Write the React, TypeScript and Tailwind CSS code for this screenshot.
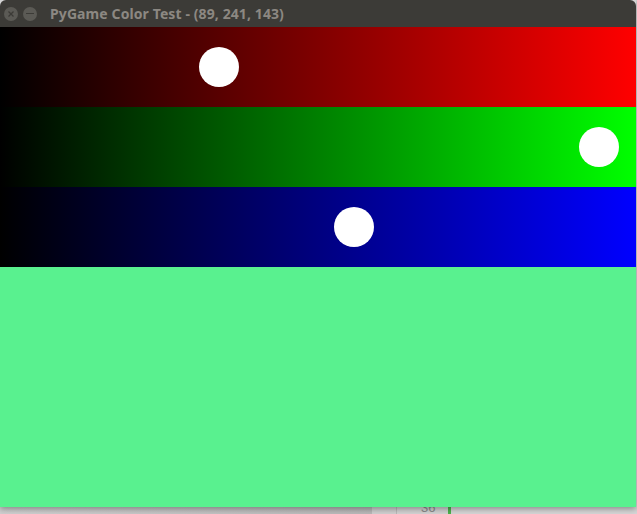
import React from "react";

const bands = [
  { grad: "bg-[linear-gradient(to_right,#000000,#ff0000)]", x: 219 },
  { grad: "bg-[linear-gradient(to_right,#000000,#00ff00)]", x: 599 },
  { grad: "bg-[linear-gradient(to_right,#000000,#0000ff)]", x: 354 },
];

export default function App() {
  return (
    <div className="w-[637px] h-[514px] overflow-hidden bg-[#d4d4d4] flex flex-col">
      <div className="relative z-10 w-[636px] flex flex-col shadow-[0_2px_6px_rgba(0,0,0,0.35)]">
        <div className="h-[27px] bg-[#3c3b37] rounded-t-[6px] flex items-center pl-[4px] gap-[5px]">
          <div className="w-[14px] h-[14px] rounded-full bg-[#5b5a55] flex items-center justify-center">
            <svg width="8" height="8" viewBox="0 0 8 8">
              <path d="M1.5 1.5L6.5 6.5M6.5 1.5L1.5 6.5" stroke="#3c3b37" strokeWidth="1.3" />
            </svg>
          </div>
          <div className="w-[14px] h-[14px] rounded-full bg-[#5b5a55] flex items-center justify-center">
            <div className="w-[8px] h-[1.5px] bg-[#3c3b37]" />
          </div>
          <span
            className="ml-[8px] text-[14px] font-bold text-[#8c8882] leading-none tracking-[0.1px]"
            style={{ fontFamily: '"Noto Sans", "DejaVu Sans", sans-serif' }}
          >
            PyGame Color Test - (89, 241, 143)
          </span>
        </div>
        {bands.map((b, i) => (
          <div key={i} className={`relative h-[80px] ${b.grad}`}>
            <div
              className="absolute top-[20px] w-[40px] h-[40px] rounded-full bg-white"
              style={{ left: b.x - 20 }}
            />
          </div>
        ))}
        <div className="h-[240px] bg-[#59f18f]" />
      </div>
      <div className="flex-1 flex flex-row">
        <div className="w-[372px] bg-[linear-gradient(to_right,#cfcfcf,#b8b8b8)]" />
        <div className="w-[25px] bg-[#cfcfcf] border-r border-[#b9b9b9]" />
        <div className="w-[51px] bg-[#d2d2d2] relative overflow-visible">
          <span
            className="absolute left-[24px] top-[-6px] text-[13px] text-[#8a8a8a] leading-none"
            style={{ fontFamily: '"Liberation Sans", sans-serif' }}
          >
            36
          </span>
        </div>
        <div className="w-[3px] bg-[#4bb24b]" />
        <div className="flex-1 bg-[#d6d6d6]" />
      </div>
    </div>
  );
}
